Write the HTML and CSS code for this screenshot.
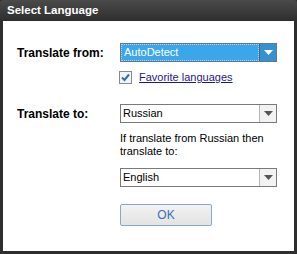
FILE: index.html
```html
<!DOCTYPE html>
<html lang="en">
<head>
  <meta charset="UTF-8">
  <title>Select Language</title>
  <link rel="stylesheet" href="styles.css">
</head>
<body>
  <div class="window">
    <div class="titlebar">Select Language</div>
    <div class="content">
      <div class="row">
        <label class="label">Translate from:</label>
        <div class="select active">
          <span class="value">AutoDetect</span>
          <span class="drop"><svg width="9" height="5" viewBox="0 0 9 5"><path d="M0 0h9L4.5 5z" fill="#fff"/></svg></span>
        </div>
      </div>
      <div class="check-row">
        <span class="checkbox"><svg width="11" height="11" viewBox="0 0 11 11"><path d="M2 5.5l2.5 2.5L9 2.5" fill="none" stroke="#3a6e9a" stroke-width="2"/></svg></span>
        <a href="#" class="link">Favorite languages</a>
      </div>

      <div class="row to-row">
        <label class="label">Translate to:</label>
        <div class="select">
          <span class="value">Russian</span>
          <span class="drop"><svg width="9" height="5" viewBox="0 0 9 5"><path d="M0 0h9L4.5 5z" fill="#555"/></svg></span>
        </div>
      </div>
      <p class="hint">If translate from Russian then translate to:</p>
      <div class="row">
        <span class="label"></span>
        <div class="select">
          <span class="value">English</span>
          <span class="drop"><svg width="9" height="5" viewBox="0 0 9 5"><path d="M0 0h9L4.5 5z" fill="#555"/></svg></span>
        </div>
      </div>
      <div class="row buttons">
        <span class="label"></span>
        <button type="button" class="ok">OK</button>
      </div>
    </div>
  </div>
</body>
</html>
```

FILE: styles.css
```css
body {
  margin: 0;
  font-family: "Liberation Sans", Arial, sans-serif;
  font-size: 11px;
  color: #000;
  background: #fff;
}
.window {
  width: 297px;
  height: 254px;
  box-sizing: border-box;
  border: 3px solid #2e2e2e;
  border-top: none;
  background: #fff;
  display: flex;
  flex-direction: column;
}
.titlebar {
  height: 21px;
  margin: 0 -3px;
  padding-left: 7px;
  background: linear-gradient(#4a4a4a, #2e2e2e);
  color: #fff;
  font-weight: bold;
  font-size: 11.5px;
  line-height: 21px;
  border-radius: 3px 3px 0 0;
}
.content {
  padding: 22px 17px 0 14px;
}
.row {
  display: flex;
  align-items: center;
}
.label {
  width: 103px;
  font-weight: bold;
  font-size: 12px;
  white-space: nowrap;
}
.select {
  width: 157px;
  height: 19px;
  box-sizing: border-box;
  border: 1px solid #7a7a7a;
  display: flex;
  background: #fff;
}
.select .value {
  flex: 1;
  padding-left: 2px;
  line-height: 17px;
}
.select .drop {
  width: 16px;
  border-left: 1px solid #b5b5b5;
  background: #f2f2f2;
  display: flex;
  align-items: center;
  justify-content: center;
}
.select.active {
  border-color: #5a7a96;
  background: #3ba6e9;
}
.select.active .value {
  color: #fff;
  border: 1px dotted #ccc;
  line-height: 15px;
}
.select.active .drop {
  background: #3592ce;
  border-left-color: #2c6f9c;
}
.check-row {
  display: flex;
  align-items: center;
  margin: 9px 0 0 102px;
}
.checkbox {
  width: 11px;
  height: 11px;
  border: 1px solid #8a8a8a;
  background: #eef4f8;
  display: flex;
  margin-right: 7px;
}
.link {
  color: #1f1a8a;
  line-height: 13px;
}
.to-row {
  margin-top: 20px;
}
.hint {
  margin: 9px 0 10px 103px;
  width: 157px;
  line-height: 13px;
}
.buttons {
  margin-top: 17px;
}
.ok {
  width: 92px;
  height: 22px;
  border: 1px solid #8aa8c2;
  border-radius: 2px;
  background: linear-gradient(#f2f2f2, #e3e3e3);
  color: #3a6fb0;
  font-family: "Liberation Sans", Arial, sans-serif;
  font-size: 12px;
}
```
